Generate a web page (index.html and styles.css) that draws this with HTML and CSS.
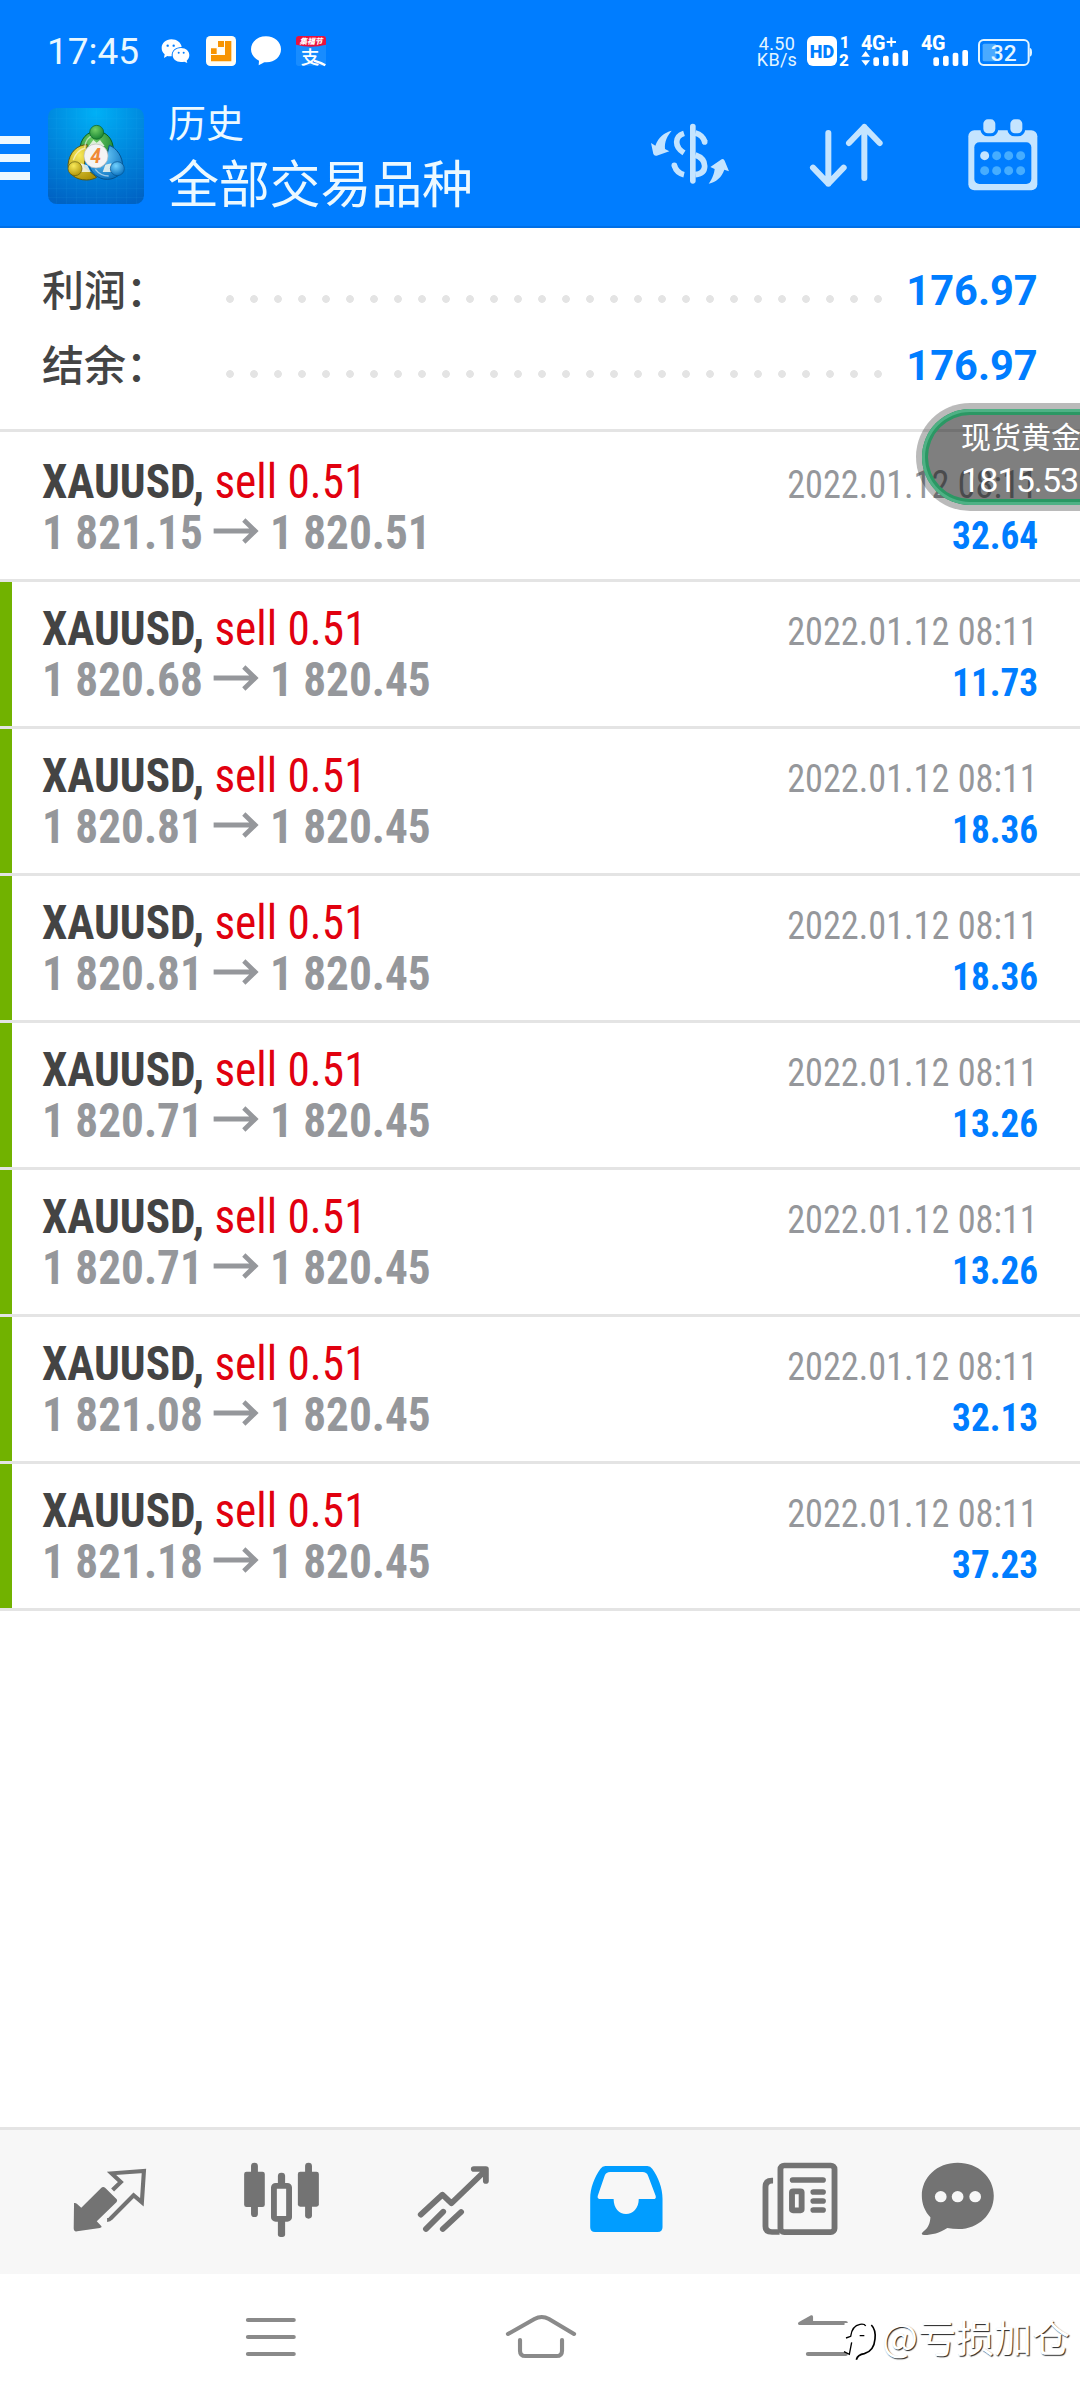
FILE: index.html
```html
<!DOCTYPE html>
<html lang="zh-CN">
<head>
<meta charset="utf-8">
<title>历史</title>
<link rel="stylesheet" href="styles.css">
</head>
<body>
<div class="screen">
  <header class="header">
    <div class="status">
      <span class="clock">17:45</span>
      <div class="notices">
        <svg width="30" height="30" viewBox="0 0 90 90" fill="#fff"><path d="M31 10c17 0 29 10 31 23-19 0-31 11-30 28-5 0-10 0-13-1l-10 6 2-11C5 50 2 44 2 36c0-15 13-26 29-26z"/><path d="M60 36c15 0 25 10 25 21 0 8-3 12-8 17l2 7-9-4c-3 1-6 1-10 1-15 0-25-9-25-21s10-21 25-21z"/><g fill="#007dff"><circle cx="20" cy="29" r="3.5"/><circle cx="38" cy="29" r="3.5"/><circle cx="53" cy="50" r="3"/><circle cx="68" cy="50" r="3"/></g></svg>
        <svg width="30" height="30" viewBox="0 0 90 90"><rect width="90" height="90" rx="13" fill="#fffdf5"/><path fill="#f79400" d="M57 15h19v61H15V57h42zM36 15h18v18H36zM15 37h17v17H15z"/></svg>
        <svg width="30" height="30" viewBox="0 0 90 90"><path fill="#fff" d="M45 1c26 0 45 17 45 39S72 79 47 79c-5 0-8 0-11 2l-13 7 1-14C9 67 0 55 0 40 0 18 19 1 45 1z"/></svg>
        <svg class="wide" width="30" height="30" viewBox="0 0 90 90"><rect width="90" height="90" rx="8" fill="#188cff"/><path d="M0 8q0-8 8-8h74q8 0 8 8v18q-45 12-90 0z" fill="#e8123e"/><text x="45" y="24" class="promo">集福节</text><text x="42" y="83" class="pay">支</text><path d="M54 74q18 5 34 14" fill="none" stroke="#fff" stroke-width="7"/></svg>
      </div>
      <div class="indicators">
        <div class="speed"><span>4.50</span><span>KB/s</span></div>
        <svg class="wide" width="46" height="30" viewBox="0 0 138 90" fill="#fff"><rect width="90" height="90" rx="18"/><text x="45" y="66" class="hd">HD</text><text x="113" y="36" class="sim">1</text><text x="111" y="89" class="sim">2</text></svg>
        <svg class="wide" width="48" height="30" viewBox="0 0 144 90" fill="#fff"><text x="0" y="43" class="net">4G</text><path d="M77 15h11V4h6v11h11v6H94v11h-6V21H77zM14 45l13 17H1zM14 89L1 73h26z"/><rect x="37" y="64" width="17" height="26" rx="6"/><rect x="66" y="59" width="17" height="31" rx="6"/><rect x="95" y="50" width="17" height="40" rx="6"/><rect x="124" y="42" width="17" height="48" rx="6"/></svg>
        <svg class="wide" width="48" height="30" viewBox="0 0 144 90" fill="#fff"><text x="0" y="43" class="net">4G</text><rect x="37" y="64" width="17" height="26" rx="6"/><rect x="66" y="59" width="17" height="31" rx="6"/><rect x="95" y="50" width="17" height="40" rx="6"/><rect x="124" y="42" width="17" height="48" rx="6"/></svg>
        <svg width="55" height="30" viewBox="0 0 165 90"><rect x="3" y="12" width="149" height="75" rx="14" fill="none" stroke="#e4f5ff" stroke-width="6"/><rect x="14" y="23" width="41" height="53" rx="5" fill="#4aaaff"/><path d="M155 36q7 0 7 13t-7 13z" fill="#e4f5ff"/><text x="77" y="74" class="charge">32</text></svg>
      </div>
    </div>
    <div class="appbar">
      <div class="menu"><i></i><i></i><i></i></div>
      <svg class="logo" width="96" height="96" viewBox="24 24 288 288">
        <defs>
          <radialGradient id="sky" cx=".5" cy=".05" r="1"><stop offset="0" stop-color="#00b0f6"/><stop offset=".55" stop-color="#0085dc"/><stop offset="1" stop-color="#0063c4"/></radialGradient>
          <radialGradient id="green" cx=".4" cy=".3" r=".8"><stop offset="0" stop-color="#72cf66"/><stop offset="1" stop-color="#0c7a2c"/></radialGradient>
          <radialGradient id="gold" cx=".4" cy=".3" r=".8"><stop offset="0" stop-color="#f8ea5a"/><stop offset="1" stop-color="#a98b00"/></radialGradient>
          <radialGradient id="aqua" cx=".4" cy=".3" r=".8"><stop offset="0" stop-color="#72d2ff"/><stop offset="1" stop-color="#0067b8"/></radialGradient>
        </defs>
        <rect x="24" y="24" width="288" height="288" rx="26" fill="url(#sky)"/>
        <path d="M50 24v288M80 24v288M110 24v288M140 24v288M170 24v288M200 24v288M230 24v288M260 24v288M290 24v288M24 55h288M24 85h288M24 115h288M24 145h288M24 175h288M24 205h288M24 235h288M24 265h288M24 292h288" stroke="#3cc0f8" stroke-opacity=".14" stroke-width="2"/>
        <path d="M120 150c0-34 22-56 50-56s50 22 50 56c0 20-6 30-12 38l-14-40h-48z" fill="url(#green)" stroke="#075f22" stroke-width="3"/>
        <path d="M142 134c-30 0-54 22-58 60 0 28 22 46 56 46 12 0 24-4 30-8l-38-32z" fill="url(#gold)" stroke="#5d5a10" stroke-width="3"/>
        <path d="M208 136c22 8 40 34 40 62 0 24-22 40-46 40-30 0-46-20-54-38l46-6z" fill="url(#aqua)" stroke="#06538e" stroke-width="3"/>
        <path d="M134 142q4-30 26-36M100 180q10-30 36-36M166 208q16 20 40 20" fill="none" stroke="#fff" stroke-opacity=".55" stroke-width="4"/>
        <path d="M146 138l14-18 10 8 10-8 14 18zM118 216l4-26 20 6 10 20zM188 216l8-22 18-4 4 26z" fill="#f2f7ee" fill-opacity=".85"/>
        <circle cx="170" cy="97" r="21" fill="url(#green)" stroke="#075f22" stroke-width="2"/>
        <circle cx="105" cy="206" r="21" fill="url(#gold)" stroke="#5d5a10" stroke-width="2"/>
        <circle cx="232" cy="206" r="21" fill="url(#aqua)" stroke="#06538e" stroke-width="2"/>
        <circle cx="168" cy="168" r="36" fill="#f4f4f4" stroke="#b8b8b8" stroke-width="2"/>
        <text x="167" y="189" class="four">4</text>
      </svg>
      <div class="titles"><span class="sub">历史</span><span class="title">全部交易品种</span></div>
      <div class="actions">
        <svg width="80" height="65.3" viewBox="30 40 240 196" fill="#c4e4ff"><rect x="150" y="42" width="17" height="180" rx="8.5"/><path d="M132 71Q110 78 110 97t22 33M166 70q22 6 29 27M166 136q28 10 28 33t-28 26M103 168q7 22 29 27" fill="none" stroke="#c4e4ff" stroke-width="17"/><circle cx="194" cy="97" r="8.5"/><circle cx="103" cy="167" r="8.5"/><path d="M95 63c-22 5-40 20-49 45l-13-8 7 33q3 7 10 5l38-13-13-7c-2-23 7-40 20-55zM206 222c12-16 17-32 18-44l-13-6 34-23q6-3 9 4l13 32-14-5c-8 24-25 37-47 42z"/></svg>
        <svg width="80" height="70" viewBox="260 303 240 210" fill="none" stroke="#c4e4ff" stroke-width="18" stroke-linecap="round" stroke-linejoin="round"><path d="M324 339v152M278 443l46 48 46-48M432 474V321M386 369l46-48 46 48"/></svg>
        <svg width="72" height="76.7" viewBox="740 293 216 230"><rect x="744" y="330" width="207" height="180" rx="18" fill="#c4e4ff"/><rect x="762" y="366" width="171" height="125" rx="15" fill="#007dff"/><g fill="#c4e4ff" stroke="#007dff" stroke-width="9"><rect x="784.500" y="292.500" width="45" height="51" rx="18"/><rect x="865.500" y="292.500" width="45" height="51" rx="18"/></g><circle cx="793" cy="406" r="13.500" fill="#c4e4ff"/><g fill="#46adff"><circle cx="829" cy="406" r="13.500"/><circle cx="865" cy="406" r="13.500"/><circle cx="901" cy="406" r="13.500"/><circle cx="793" cy="451" r="13.500"/><circle cx="829" cy="451" r="13.500"/><circle cx="865" cy="451" r="13.500"/><circle cx="901" cy="451" r="13.500"/></g></svg>
      </div>
    </div>
  </header>

  <section class="summary">
    <div class="total"><span class="label">利润：</span><span class="dots"></span><span class="sum">176.97</span></div>
    <div class="total"><span class="label">结余：</span><span class="dots"></span><span class="sum">176.97</span></div>
  </section>

  <main class="deals">
    <div class="deal first">
      <div class="line"><span class="symbol">XAUUSD, <span class="side">sell 0.51</span></span><span class="date">2022.01.12 08:11</span></div>
      <div class="line"><span class="price">1 821.15 <svg class="arrow" width="49" height="26" viewBox="0 0 49 26"><path d="M0 13h44M32 2l12 11-12 11"/></svg> 1 820.51</span><span class="profit">32.64</span></div>
    </div>
    <div class="deal marked">
      <div class="line"><span class="symbol">XAUUSD, <span class="side">sell 0.51</span></span><span class="date">2022.01.12 08:11</span></div>
      <div class="line"><span class="price">1 820.68 <svg class="arrow" width="49" height="26" viewBox="0 0 49 26"><path d="M0 13h44M32 2l12 11-12 11"/></svg> 1 820.45</span><span class="profit">11.73</span></div>
    </div>
    <div class="deal marked">
      <div class="line"><span class="symbol">XAUUSD, <span class="side">sell 0.51</span></span><span class="date">2022.01.12 08:11</span></div>
      <div class="line"><span class="price">1 820.81 <svg class="arrow" width="49" height="26" viewBox="0 0 49 26"><path d="M0 13h44M32 2l12 11-12 11"/></svg> 1 820.45</span><span class="profit">18.36</span></div>
    </div>
    <div class="deal marked">
      <div class="line"><span class="symbol">XAUUSD, <span class="side">sell 0.51</span></span><span class="date">2022.01.12 08:11</span></div>
      <div class="line"><span class="price">1 820.81 <svg class="arrow" width="49" height="26" viewBox="0 0 49 26"><path d="M0 13h44M32 2l12 11-12 11"/></svg> 1 820.45</span><span class="profit">18.36</span></div>
    </div>
    <div class="deal marked">
      <div class="line"><span class="symbol">XAUUSD, <span class="side">sell 0.51</span></span><span class="date">2022.01.12 08:11</span></div>
      <div class="line"><span class="price">1 820.71 <svg class="arrow" width="49" height="26" viewBox="0 0 49 26"><path d="M0 13h44M32 2l12 11-12 11"/></svg> 1 820.45</span><span class="profit">13.26</span></div>
    </div>
    <div class="deal marked">
      <div class="line"><span class="symbol">XAUUSD, <span class="side">sell 0.51</span></span><span class="date">2022.01.12 08:11</span></div>
      <div class="line"><span class="price">1 820.71 <svg class="arrow" width="49" height="26" viewBox="0 0 49 26"><path d="M0 13h44M32 2l12 11-12 11"/></svg> 1 820.45</span><span class="profit">13.26</span></div>
    </div>
    <div class="deal marked">
      <div class="line"><span class="symbol">XAUUSD, <span class="side">sell 0.51</span></span><span class="date">2022.01.12 08:11</span></div>
      <div class="line"><span class="price">1 821.08 <svg class="arrow" width="49" height="26" viewBox="0 0 49 26"><path d="M0 13h44M32 2l12 11-12 11"/></svg> 1 820.45</span><span class="profit">32.13</span></div>
    </div>
    <div class="deal marked">
      <div class="line"><span class="symbol">XAUUSD, <span class="side">sell 0.51</span></span><span class="date">2022.01.12 08:11</span></div>
      <div class="line"><span class="price">1 821.18 <svg class="arrow" width="49" height="26" viewBox="0 0 49 26"><path d="M0 13h44M32 2l12 11-12 11"/></svg> 1 820.45</span><span class="profit">37.23</span></div>
    </div>
  </main>

  <nav class="tabs">
    <svg viewBox="69.700 60 499.500 432" preserveAspectRatio="none"><path fill="#737373" d="M215 279q5-1 8 2l13 12 57-58q6-7 13-1l33 34q3 4-1 9l-57 57 13 14q3 4-4 6l-66 10q-10 2-10-9z"/><path fill="none" stroke="#737373" stroke-width="12" d="M311 330q7 0 10-4l67-70 24 21 6-94-94 7 27 26-24 24"/></svg>
    <svg viewBox="569.200 60 499.500 432" preserveAspectRatio="none" fill="#737373"><rect x="729" y="158" width="20" height="163" rx="10"/><rect x="709" y="185" width="60" height="106" rx="7"/><rect x="886" y="158" width="20" height="168" rx="10"/><rect x="865" y="185" width="61" height="105" rx="7"/><rect x="807" y="188" width="21" height="60" rx="10"/><rect x="807" y="320" width="21" height="61" rx="8"/><rect x="795.500" y="227.500" width="44" height="99" rx="5" fill="#f7f7f7" stroke="#737373" stroke-width="17"/></svg>
    <svg viewBox="1068.700 60 499.500 432" preserveAspectRatio="none" fill="none" stroke="#737373" stroke-width="17" stroke-linejoin="round" stroke-linecap="round"><path d="M1222 314l63-60 26 26 98-98M1376 177h35v36"/><path d="M1237 357l50-52M1286 357l53-51"/></svg>
    <svg viewBox=".200 60 499.500 432" preserveAspectRatio="none"><path fill="#019dff" d="M190 168h122q9 0 14 8c18 26 30 58 30 90v86q0 14-14 14H160q-14 0-14-14v-86c0-32 12-64 30-90q5-8 14-8z"/><path fill="#f7f7f7" d="M204 186h94q12 0 16 11l22 60q3 10-7 10h-42c0 28-17 45-37 45s-36-17-36-45h-37q-12 0-9-10l20-60q4-11 16-11z"/></svg>
    <svg viewBox="499.700 60 499.500 432" preserveAspectRatio="none" fill="none" stroke="#737373" stroke-width="17"><rect x="698.500" y="166.500" width="157" height="200" rx="11"/><path d="M677 212h-3q-19 0-19 19v118q0 17 19 17h22"/><path stroke-linecap="round" d="M734 210h88M794 246h28M794 273h28M794 300h28"/><rect x="732" y="244" width="28" height="57" rx="3"/></svg>
    <svg viewBox="999.200 60 499.500 432" preserveAspectRatio="none"><path fill="#737373" d="M1213 158c60 0 105 44 105 99s-44 100-102 100q-17 0-33-3c-23 15-44 21-67 21q-12-1-4-9c17-12 21-28 22-44-16-18-25-40-25-65 0-55 44-99 104-99z"/><g fill="#f7f7f7"><circle cx="1164" cy="260" r="17"/><circle cx="1213" cy="260" r="17"/><circle cx="1264" cy="260" r="17"/></g></svg>
  </nav>
  <footer class="system">
    <svg viewBox="392 492 784.100 378" preserveAspectRatio="none"><path d="M720 630h133M720 681h133M720 732h133"/></svg>
    <svg viewBox="1176 492 784.100 378" preserveAspectRatio="none"><path d="M1475 672l77-45q21-12 42 0l73 45M1510 690v32q0 16 16 16h90q16 0 16-16v-32"/></svg>
    <svg viewBox="392 492 784.100 378" preserveAspectRatio="none"><path d="M778 732h110M790 639h98"/><path class="head" d="M752 645q-6-4 0-9l35-20q6-2 6 5v24z"/></svg>
  </footer>

  <aside class="ticker"><div class="ring"><span class="asset">现货黄金</span><span class="quote">1815.53</span></div></aside>
  <div class="credit">
    <svg width="42" height="46" viewBox="182 68 126 138"><path d="M196 80h90q12 10 10 50l-20 45-46 20-14-15-30-20z" fill="#fff"/><g fill="none" stroke="#000" stroke-width="4"><path d="M200 125l14-5q4-32 28-36 14-2 17 5M217 138l-7 36-16-8M241 118h14"/><path stroke-width="5" d="M276 86q14 14 11 42-3 36-32 44-20 3-24 18"/></g></svg>
    <span>@亏损加仓</span>
  </div>
</div>
</body>
</html>
```

FILE: styles.css
```css
* { box-sizing: border-box; }
body { margin: 0; background: #fff; font-family: Roboto, "Noto Sans CJK SC", sans-serif; }
svg { display: block; flex: none; }
.wide { overflow: visible; }

.screen {
  position: relative;
  width: 1080px;
  height: 2400px;
  overflow: hidden;
  display: flex;
  flex-direction: column;
  background: #fff;
}

/* header */
.header { height: 228px; background: #007dff; border-bottom: 2px solid #006fe6; }
.status { height: 84px; display: flex; align-items: flex-start; padding: 36px 47px 0 47px; }
.clock { width: 114px; font-size: 37px; line-height: 32px; color: #e8f7ff; }
.notices { display: flex; gap: 15px; }
.promo { font: 900 italic 23px "Noto Sans CJK SC", sans-serif; fill: #fff; text-anchor: middle; }
.pay { font: 500 56px "Noto Sans CJK SC", sans-serif; fill: #fff; text-anchor: middle; }
.indicators { margin-left: auto; display: flex; }
.speed {
  width: 50px;
  display: flex;
  flex-direction: column;
  align-items: center;
  padding-right: 10px;
  font-size: 18px;
  line-height: 16px;
  color: #e4f5ff;
  letter-spacing: .3px;
}
.indicators svg + svg { margin-left: 8px; }
.indicators svg:nth-of-type(3) { margin-left: 12px; }
.indicators svg:nth-of-type(4) { margin-left: 9px; }
.hd { font: 900 54px Roboto, sans-serif; fill: #007dff; text-anchor: middle; }
.sim { font: 800 51px Roboto, sans-serif; text-anchor: middle; }
.net { font: 800 59px Roboto, sans-serif; letter-spacing: -1px; }
.charge { font: 500 68px Roboto, sans-serif; fill: #e4f5ff; text-anchor: middle; }

.appbar { height: 144px; display: flex; align-items: center; }
.menu { width: 48px; padding-top: 4px; display: flex; flex-direction: column; gap: 10px; }
.menu i { width: 30px; height: 8px; background: #ecf8ff; }
.four { font: italic 700 58px Roboto, sans-serif; fill: #f08a35; text-anchor: middle; }
.titles { margin-left: 24px; padding-bottom: 11px; display: flex; flex-direction: column; color: #ecf9ff; font-family: "Noto Sans CJK SC", sans-serif; font-weight: 400; }
.sub { font-size: 38px; line-height: 60px; }
.title { font-size: 51px; line-height: 60px; letter-spacing: -.2px; }
.actions { margin: 0 41px 0 auto; display: flex; align-items: center; }
.actions svg:nth-child(2) { margin: 0 80px 0 77px; }

/* totals */
.summary { height: 204px; padding: 22px 42px 0; border-bottom: 3px solid #e4e4e4; }
.total { height: 75px; display: flex; align-items: center; }
.label { width: 176px; font: 500 42px/60px "Noto Sans CJK SC", sans-serif; color: #444; white-space: nowrap; }
.dots {
  width: 672px;
  height: 24px;
  margin-top: 22px;
  background: radial-gradient(circle at 12px 12px, #e4e4e4 3.500px, transparent 4.200px) 0 0 / 24px 24px repeat-x;
}
.sum { margin-left: auto; padding-top: 6px; font-size: 42px; font-weight: 700; color: #007dff; transform: scaleX(.99); transform-origin: 100% 0; }

/* deals */
.deal {
  height: 147px;
  padding: 21px 42px 0;
  border-bottom: 3px solid #e4e4e4;
  font-family: "Roboto Condensed", Roboto, sans-serif;
}
.deal.first { height: 150px; padding-top: 24px; }
.marked { background: linear-gradient(#71b200, #71b200) 0 0 / 12px 144px no-repeat; }
.line { height: 51px; line-height: 51px; display: flex; justify-content: space-between; align-items: baseline; white-space: nowrap; }
.symbol, .price { font-size: 48px; font-weight: 700; color: #444; transform: scaleX(.943); transform-origin: 0 0; }
.side { font-weight: 400; color: #e1000f; }
.price { color: #95979b; }
.arrow { display: inline-block; vertical-align: 5px; fill: none; stroke: #95979b; stroke-width: 5; overflow: visible; }
.date, .profit { font-size: 39px; color: #95979b; transform: scaleX(.929); transform-origin: 100% 0; }
.profit { font-weight: 700; color: #007dff; transform: scaleX(.955); }

/* bottom bars */
.tabs { margin-top: auto; height: 147px; padding-left: 24px; border-top: 3px solid #e4e4e4; background: #f7f7f7; display: flex; }
.tabs svg { width: 172px; height: 144px; }
.system { height: 126px; padding-left: 135px; display: flex; background: #fff; }
.system svg { width: 270px; height: 126px; fill: none; stroke: #8a8a8a; stroke-width: 12; stroke-linecap: round; }
.system .head { fill: #8a8a8a; stroke: none; }

/* floating quote */
.ticker { position: absolute; left: 916px; top: 403px; width: 240px; height: 108px; padding: 6px; border-radius: 54px; box-shadow: inset 0 0 0 6px rgba(0,0,0,.27); }
.ring {
  height: 96px;
  padding: 8px 0 0 39px;
  border-radius: 48px;
  background: rgba(0,0,0,.5);
  box-shadow: inset 0 0 0 3px #4fb185, inset 0 0 0 6px #2b9864;
  display: flex;
  flex-direction: column;
  color: #fff;
}
.asset { font: 400 30px/36px "Noto Sans CJK SC", sans-serif; }
.quote { font-size: 34px; line-height: 54px; letter-spacing: -.9px; }

/* author credit */
.credit { position: absolute; left: 840px; top: 2319px; display: flex; align-items: flex-start; }
.credit span { font: 400 38px/34px "Noto Sans CJK SC", sans-serif; color: #fff; text-shadow: 1px 1px 1px #222; white-space: nowrap; }
```
